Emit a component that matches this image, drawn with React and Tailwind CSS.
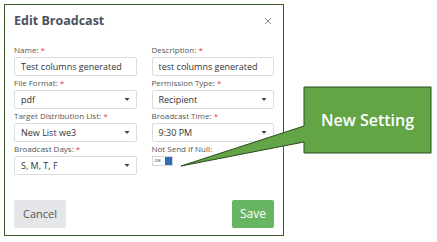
import React from 'react';

const FIELDS = [
  { label: 'Name:', req: true, value: 'Test columns generated' },
  { label: 'Description:', req: true, value: 'test columns generated' },
  { label: 'File Format:', req: true, value: 'pdf', select: true },
  { label: 'Permission Type:', req: true, value: 'Recipient', select: true },
  { label: 'Target Distribution List:', req: true, value: 'New List we3', select: true },
  { label: 'Broadcast Time:', req: true, value: '9:30 PM', select: true },
  { label: 'Broadcast Days:', req: true, value: 'S, M, T, F', select: true },
];

function Field({ label, req, value, select }) {
  return (
    <div className="flex flex-col">
      <div className="h-[11px] mb-[2px] text-[8px] leading-[11px] text-[#555]">
        {label} {req && <span className="text-[#e53e3e]">*</span>}
      </div>
      <div className="h-[19px] flex items-center justify-between border border-[#dcdcdc] rounded-[2px] bg-white pl-[6px] pr-[6px] text-[9px] text-[#333]">
        <span>{value}</span>
        {select && (
          <svg width="6" height="4" viewBox="0 0 6 4">
            <path d="M0.5 0 L5.5 0 L3 3 Z" fill="#444" />
          </svg>
        )}
      </div>
    </div>
  );
}

export default function App() {
  return (
    <div
      className="relative w-[437px] h-[242px] bg-white overflow-hidden"
      style={{ fontFamily: '"Open Sans", "Liberation Sans", sans-serif' }}
    >
      <div className="ml-[4px] mt-[4px] w-[280px] h-[232px] border border-[#3c5a2c] bg-white px-[9px] pt-[6px] flex flex-col">
        <div className="flex items-center justify-between h-[20px]">
          <h1 className="text-[12.5px] font-bold text-[#4a5160] leading-[20px]">Edit Broadcast</h1>
          <svg width="8" height="8" viewBox="0 0 8 8" className="mr-[2px]">
            <path d="M1 1 L7 7 M7 1 L1 7" stroke="#8a8a8a" strokeWidth="1" />
          </svg>
        </div>

        <div className="mt-[13px] grid grid-cols-2 gap-x-[15px] gap-y-[1px]">
          {FIELDS.map((f) => (
            <Field key={f.label} {...f} />
          ))}
          <div className="flex flex-col">
            <div className="h-[11px] mb-[2px] text-[8px] leading-[11px] text-[#555]">Not Send If Null:</div>
            <div className="flex items-center w-[21px] h-[10px] border border-[#d6d6d6] bg-white">
              <span className="flex-1 text-[4px] leading-none text-[#333] pl-[2px]">ON</span>
              <span className="w-[7px] h-[8px] bg-[#2f6db5]" />
            </div>
          </div>
        </div>

        <div className="mt-auto mb-[7px] flex items-center justify-between">
          <button className="w-[52px] h-[28px] rounded-[2px] bg-[#e4e6ea] text-[11px] text-[#555]">Cancel</button>
          <button className="w-[42px] h-[28px] rounded-[2px] bg-[#67b563] text-[12px] text-white">Save</button>
        </div>
      </div>

      <svg className="absolute inset-0" width="437" height="242" viewBox="0 0 437 242">
        <path
          d="M304 87 L431 87 L431 153 L304 153 L304 142 L181 166 L304 126 Z"
          fill="#62a446"
          stroke="#2d4a1e"
          strokeWidth="1"
        />
      </svg>
      <div className="absolute left-[304px] top-[87px] w-[127px] h-[66px] flex items-center justify-center text-[16px] font-semibold text-white">
        New Setting
      </div>
    </div>
  );
}
